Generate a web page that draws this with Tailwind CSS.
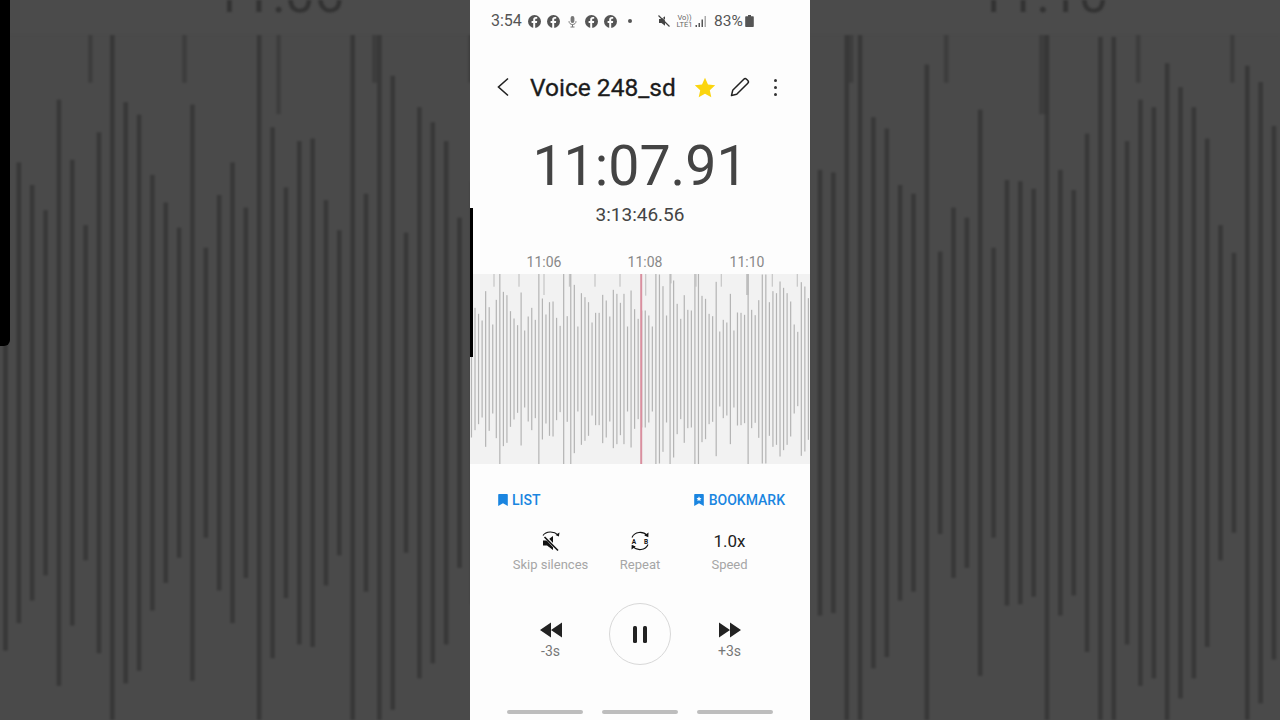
<!DOCTYPE html>
<html lang="en">
<head>
  <meta charset="UTF-8" />
  <title>Voice 248_sd</title>
  <script src="https://cdn.jsdelivr.net/npm/@tailwindcss/browser@4"></script>
</head>
<body class="relative w-[1280px] h-[720px] overflow-hidden bg-[#4b4b4b] flex justify-center font-['Roboto',sans-serif]">

  <!-- blurred copy of the recording behind the phone -->
  <svg class="absolute inset-0 w-[1280px] h-[720px] blur-[1px] text-[#383838]" viewBox="0 264.7 340 191.2" preserveAspectRatio="none">
    <rect x="0" y="274" width="340" height="190" fill="#4a4a4a"></rect>
    <use href="#wave"></use>
    <text x="74" y="267.8" text-anchor="middle" font-size="14" fill="#333" font-family="Roboto">11:06</text>
    <text x="277" y="267.8" text-anchor="middle" font-size="14" fill="#333" font-family="Roboto">11:10</text>
  </svg>
  <div class="absolute left-0 top-0 w-[10px] h-[346px] bg-black rounded-br-[6px]"></div>

  <main class="relative w-[340px] h-[720px] bg-[#fdfdfd] flex flex-col shrink-0">
    <div class="absolute left-0 top-[208px] w-[3px] h-[149px] bg-black"></div>

    <!-- status bar -->
    <div class="h-[42px] flex items-center pl-[21px] text-[16px] text-[#555]">
      <span class="w-[31px]">3:54</span>
      <div class="flex items-center ml-[6px] gap-[6px] w-[105px]">
        <svg class="w-[13px] h-[13px]" viewBox="0 0 13 13"><circle cx="6.5" cy="6.5" r="6.5" fill="#555"/><path d="M7.2 13V7.9h1.7l.3-2H7.2V4.7c0-.6.3-1 1-1h1V2.1c-.4-.1-.9-.1-1.4-.1-1.6 0-2.6 1-2.6 2.6v1.3H3.6v2h1.6V13z" fill="#fdfdfd"/></svg>
        <svg class="w-[13px] h-[13px]" viewBox="0 0 13 13"><circle cx="6.5" cy="6.5" r="6.5" fill="#555"/><path d="M7.2 13V7.9h1.7l.3-2H7.2V4.7c0-.6.3-1 1-1h1V2.1c-.4-.1-.9-.1-1.4-.1-1.6 0-2.6 1-2.6 2.6v1.3H3.6v2h1.6V13z" fill="#fdfdfd"/></svg>
        <svg class="w-[13px] h-[13px]" viewBox="0 0 13 13" fill="none"><rect x="4.6" y="1" width="3.8" height="7" rx="1.9" fill="#777"/><path d="M3 6.2c0 2 1.5 3.3 3.5 3.3S10 8.200 10 6.200M6.500 9.500V12M4.500 12h4" stroke="#777" stroke-width="1"/></svg>
        <svg class="w-[13px] h-[13px]" viewBox="0 0 13 13"><circle cx="6.5" cy="6.5" r="6.5" fill="#555"/><path d="M7.2 13V7.9h1.7l.3-2H7.2V4.7c0-.6.3-1 1-1h1V2.1c-.4-.1-.9-.1-1.4-.1-1.6 0-2.6 1-2.6 2.6v1.3H3.6v2h1.6V13z" fill="#fdfdfd"/></svg>
        <svg class="w-[13px] h-[13px]" viewBox="0 0 13 13"><circle cx="6.5" cy="6.5" r="6.5" fill="#555"/><path d="M7.2 13V7.9h1.7l.3-2H7.2V4.7c0-.6.3-1 1-1h1V2.1c-.4-.1-.9-.1-1.4-.1-1.6 0-2.6 1-2.6 2.6v1.3H3.6v2h1.6V13z" fill="#fdfdfd"/></svg>
        <span class="w-[4px] h-[4px] rounded-full bg-[#555] ml-[5px]"></span>
      </div>
      <svg class="w-[14px] h-[14px] ml-[24px]" viewBox="0 0 14 14"><path d="M2 5h2.500L8 2.200v9.600L4.500 9H2z" fill="#444"/><path d="M1.500 1.500l11 11" stroke="#444" stroke-width="1.300"/><path d="M1.500 1.500l11 11" stroke="#fdfdfd" stroke-width=".6" transform="translate(.9 -.9)"/></svg>
      <div class="w-[17px] ml-[5px] flex flex-col items-center text-[7.500px] leading-[7.500px] text-[#666]"><span>Vo))</span><span>LTE1</span></div>
      <svg class="w-[13px] h-[13px] ml-[1px]" viewBox="0 0 13 13"><path d="M1.500 10h1.500v2H1.500zM4.500 8H6v4H4.500zM7.500 4.500H9V12H7.500z" fill="#555"/><path d="M10.500 1H12v11h-1.500z" fill="#aaa"/></svg>
      <span class="ml-[7px] w-[30px] pt-[1px] text-[15.500px] text-[#555]">83%</span>
      <svg class="w-[9px] h-[12px] ml-[1px]" viewBox="0 0 9 12"><path d="M3 0h3v1.200h1.800c.6 0 1 .4 1 1V11c0 .6-.4 1-1 1H1.200c-.6 0-1-.4-1-1V2.200c0-.6.4-1 1-1H3z" fill="#555"/></svg>
    </div>

    <!-- title row -->
    <div class="mt-[22px] h-[46px] flex items-center">
      <svg class="ml-[26px] w-[14px] h-[20px]" viewBox="0 0 14 20" fill="none"><path d="M12 1.500L2.500 10l9.500 8.500" stroke="#222" stroke-width="1.600"/></svg>
      <h1 class="ml-[20px] w-[146px] pt-[1px] text-[24.500px] leading-[30px] text-[#1c1c1c] whitespace-nowrap [-webkit-text-stroke:0.3px_#1c1c1c]">Voice 248_sd</h1>
      <svg class="ml-[18px] w-[22px] h-[21px]" viewBox="0 0 22 21"><path d="M11 .8l3 6.700 7.200.8-5.400 4.900 1.500 7.100L11 16.700l-6.300 3.600 1.500-7.100L.8 8.300 8 7.500z" fill="#fbd50f"/></svg>
      <svg class="ml-[13px] w-[22px] h-[22px]" viewBox="0 0 22 22" fill="none"><path d="M2.500 19.500l1.200-5.200L14.800 3.200c.8-.8 1.900-.8 2.700 0l1.300 1.300c.8.800.8 1.900 0 2.700L7.700 18.300z" stroke="#222" stroke-width="1.500" stroke-linejoin="round"/></svg>
      <div class="ml-[23px] flex flex-col gap-[4px]">
        <span class="w-[3px] h-[3px] rounded-full bg-[#333]"></span>
        <span class="w-[3px] h-[3px] rounded-full bg-[#333]"></span>
        <span class="w-[3px] h-[3px] rounded-full bg-[#333]"></span>
      </div>
    </div>

    <!-- elapsed / total -->
    <div class="mt-[22px] h-[70px] flex items-center justify-center text-[55.500px] leading-[70px] text-[#444]">11:07.91</div>
    <div class="mt-[1px] h-[24px] flex items-center justify-center text-[19px] text-[#444]">3:13:46.56</div>

    <!-- time ruler -->
    <div class="mt-[27px] h-[16px] relative text-[14px] leading-[16px] text-[#888]">
      <span class="absolute left-[54px] w-[40px] text-center">11:06</span>
      <span class="absolute left-[155px] w-[40px] text-center">11:08</span>
      <span class="absolute left-[257px] w-[40px] text-center">11:10</span>
    </div>

    <!-- waveform, bars are filled in by the script below -->
    <svg class="mt-[4px] w-[340px] h-[190px] bg-[#f2f2f2] text-[#b4b4b4]" viewBox="0 274 340 190">
      <defs><g id="wave"></g></defs>
      <use href="#wave"></use>
      <rect x="170.200" y="274" width="2" height="190" fill="#d98f9f"></rect>
    </svg>

    <!-- list / bookmark -->
    <div class="mt-[26px] h-[20px] flex items-center justify-between pl-[28px] pr-[25px] text-[14px] font-medium text-[#1a85e0]">
      <div class="flex items-center gap-[4px]">
        <svg class="w-[10px] h-[12px]" viewBox="0 0 10 12"><path d="M1 0h8c.5 0 .8.300.8.800V12L5 9.300.2 12V.8C.2.300.5 0 1 0z" fill="#1a85e0"/></svg>
        <span>LIST</span>
      </div>
      <div class="flex items-center gap-[5px]">
        <svg class="w-[10px] h-[12px]" viewBox="0 0 10 12"><path d="M1 0h8c.5 0 .8.300.8.800V12L5 9.300.2 12V.8C.2.300.5 0 1 0z" fill="#1a85e0"/><path d="M5 2.300l.8 1.600 1.700.2-1.200 1.200.3 1.700L5 6.200 3.400 7l.3-1.700L2.500 4.100l1.700-.2z" fill="#fdfdfd"/></svg>
        <span>BOOKMARK</span>
      </div>
    </div>

    <!-- playback options -->
    <div class="mt-[19px] flex justify-center">
      <div class="w-[89.500px] flex flex-col items-center">
        <svg class="w-[24px] h-[24px]" viewBox="0 0 24 24" fill="none">
          <path d="M4 6.500C7 2 15 2 19 5.800" stroke="#111" stroke-width="1.100"/>
          <path d="M20.500 3.500l-.6 4-3.400-1.600z" fill="#111"/>
          <path d="M4 11.500h4l6-4.500v14l-6-4.500H4z" fill="#111"/>
          <path d="M6 7.500l13.500 14.500" stroke="#fdfdfd" stroke-width="3"/>
          <path d="M5.500 8L19 21.500" stroke="#111" stroke-width="1.600"/>
        </svg>
        <span class="mt-[3px] h-[18px] text-[13px] leading-[18px] text-[#a6a6a6] whitespace-nowrap">Skip silences</span>
      </div>
      <div class="w-[89.500px] flex flex-col items-center">
        <svg class="w-[24px] h-[24px]" viewBox="0 0 24 24" fill="none">
          <path d="M4 8.500C6.500 2.500 15 1.800 19 6.500" stroke="#111" stroke-width="1.100"/>
          <path d="M20.500 3.500l-.2 4.700-4-1.700z" fill="#111"/>
          <path d="M20 15.500C17.500 21.500 9 22.200 5 17.500" stroke="#111" stroke-width="1.100"/>
          <path d="M3.500 20.500l.2-4.700 4 1.700z" fill="#111"/>
          <text x="6" y="14.500" text-anchor="middle" font-size="6.500" font-weight="700" fill="#111" font-family="Roboto">A</text>
          <text x="18" y="14.500" text-anchor="middle" font-size="6.500" font-weight="700" fill="#111" font-family="Roboto">B</text>
        </svg>
        <span class="mt-[3px] h-[18px] text-[13px] leading-[18px] text-[#a6a6a6]">Repeat</span>
      </div>
      <div class="w-[89.500px] flex flex-col items-center">
        <span class="h-[24px] text-[17px] leading-[24px] text-[#222]">1.0x</span>
        <span class="mt-[3px] h-[18px] text-[13px] leading-[18px] text-[#a6a6a6]">Speed</span>
      </div>
    </div>

    <!-- transport -->
    <div class="mt-[29px] h-[62px] flex justify-center">
      <div class="w-[89.500px] pt-[19px] flex flex-col items-center">
        <svg class="w-[22px] h-[16px]" viewBox="0 0 22 16"><path d="M0 8l11-7.500v15zM11 8l11-7.500v15z" fill="#222"/></svg>
        <span class="mt-[4px] text-[14px] leading-[18px] text-[#777]">-3s</span>
      </div>
      <div class="w-[89.500px] flex justify-center">
        <div class="w-[62px] h-[62px] rounded-full border border-[#d8d8d8] flex items-center justify-center gap-[6px]">
          <span class="w-[4px] h-[17px] rounded-[1.500px] bg-[#222]"></span>
          <span class="w-[4px] h-[17px] rounded-[1.500px] bg-[#222]"></span>
        </div>
      </div>
      <div class="w-[89.500px] pt-[19px] flex flex-col items-center">
        <svg class="w-[22px] h-[16px]" viewBox="0 0 22 16"><path d="M0 .5l11 7.500L0 15.500zM11 .5L22 8l-11 7.500z" fill="#222"/></svg>
        <span class="mt-[4px] text-[14px] leading-[18px] text-[#777]">+3s</span>
      </div>
    </div>

    <!-- nav pills -->
    <div class="mt-[45px] flex justify-center gap-[19px]">
      <span class="w-[76px] h-[4px] rounded-full bg-[#bdbdbd]"></span>
      <span class="w-[76px] h-[4px] rounded-full bg-[#bdbdbd]"></span>
      <span class="w-[76px] h-[4px] rounded-full bg-[#bdbdbd]"></span>
    </div>
  </main>

  <script>
    // tops read off the screenshot, in 1/3 px from y=250, index 47 sits under the playhead
    const tops = [150, 172,190,210,122,170,222,148,70,124,134, 182,204,224,126,240,198,172,208,70,144,
      192,155,153,202,226,70,197,70,103,228, 128,140,155,216,187,187,133,150,198,118,
      130,157,130,228,120,176,205, 180,
      180,195,228,70,72,107,195,70,90,160, 205,134,178,180,70,70,136,145,190,197,
      94,243,208,216,130,240,186,187,193,70, 178,194,149,72,72,155,122,128,93,112,
      128,153,222,244,95,108,143];
    // short ticks at the top: [x, bottom, width]
    const ticks = [[72,110,1.2],[147,110,1.2],[222,135,1.2],[298.5,110,1.3],[375,110,1.2],[450,110,1.2],[527,137,1.2],
      [603,100,1.2],[678,110,1.3],[754,110,1.2],[832,135,2.6],[907,110,1.2],[982,110,1.2]];
    const NS = "http://www.w3.org/2000/svg";
    const wave = document.getElementById("wave");

    function addBar(x, y, w, h, opacity) {
      const r = document.createElementNS(NS, "rect");
      r.setAttribute("x", x);
      r.setAttribute("y", y);
      r.setAttribute("width", w);
      r.setAttribute("height", h);
      r.setAttribute("fill", "currentColor");
      if (opacity) r.setAttribute("opacity", opacity);
      wave.appendChild(r);
    }

    tops.forEach((t, i) => {
      const x = (4.4 + i * 10.64) / 3;
      const half = Math.min(95, 118.5 - t / 3);
      addBar(x - 0.6, 369 - half, 1.2, half * 2);
    });
    ticks.forEach(([x, b, w]) => addBar(x / 3 - w / 2, 274, w, 250 + b / 3 - 274, 0.7));
  </script>
</body>
</html>
